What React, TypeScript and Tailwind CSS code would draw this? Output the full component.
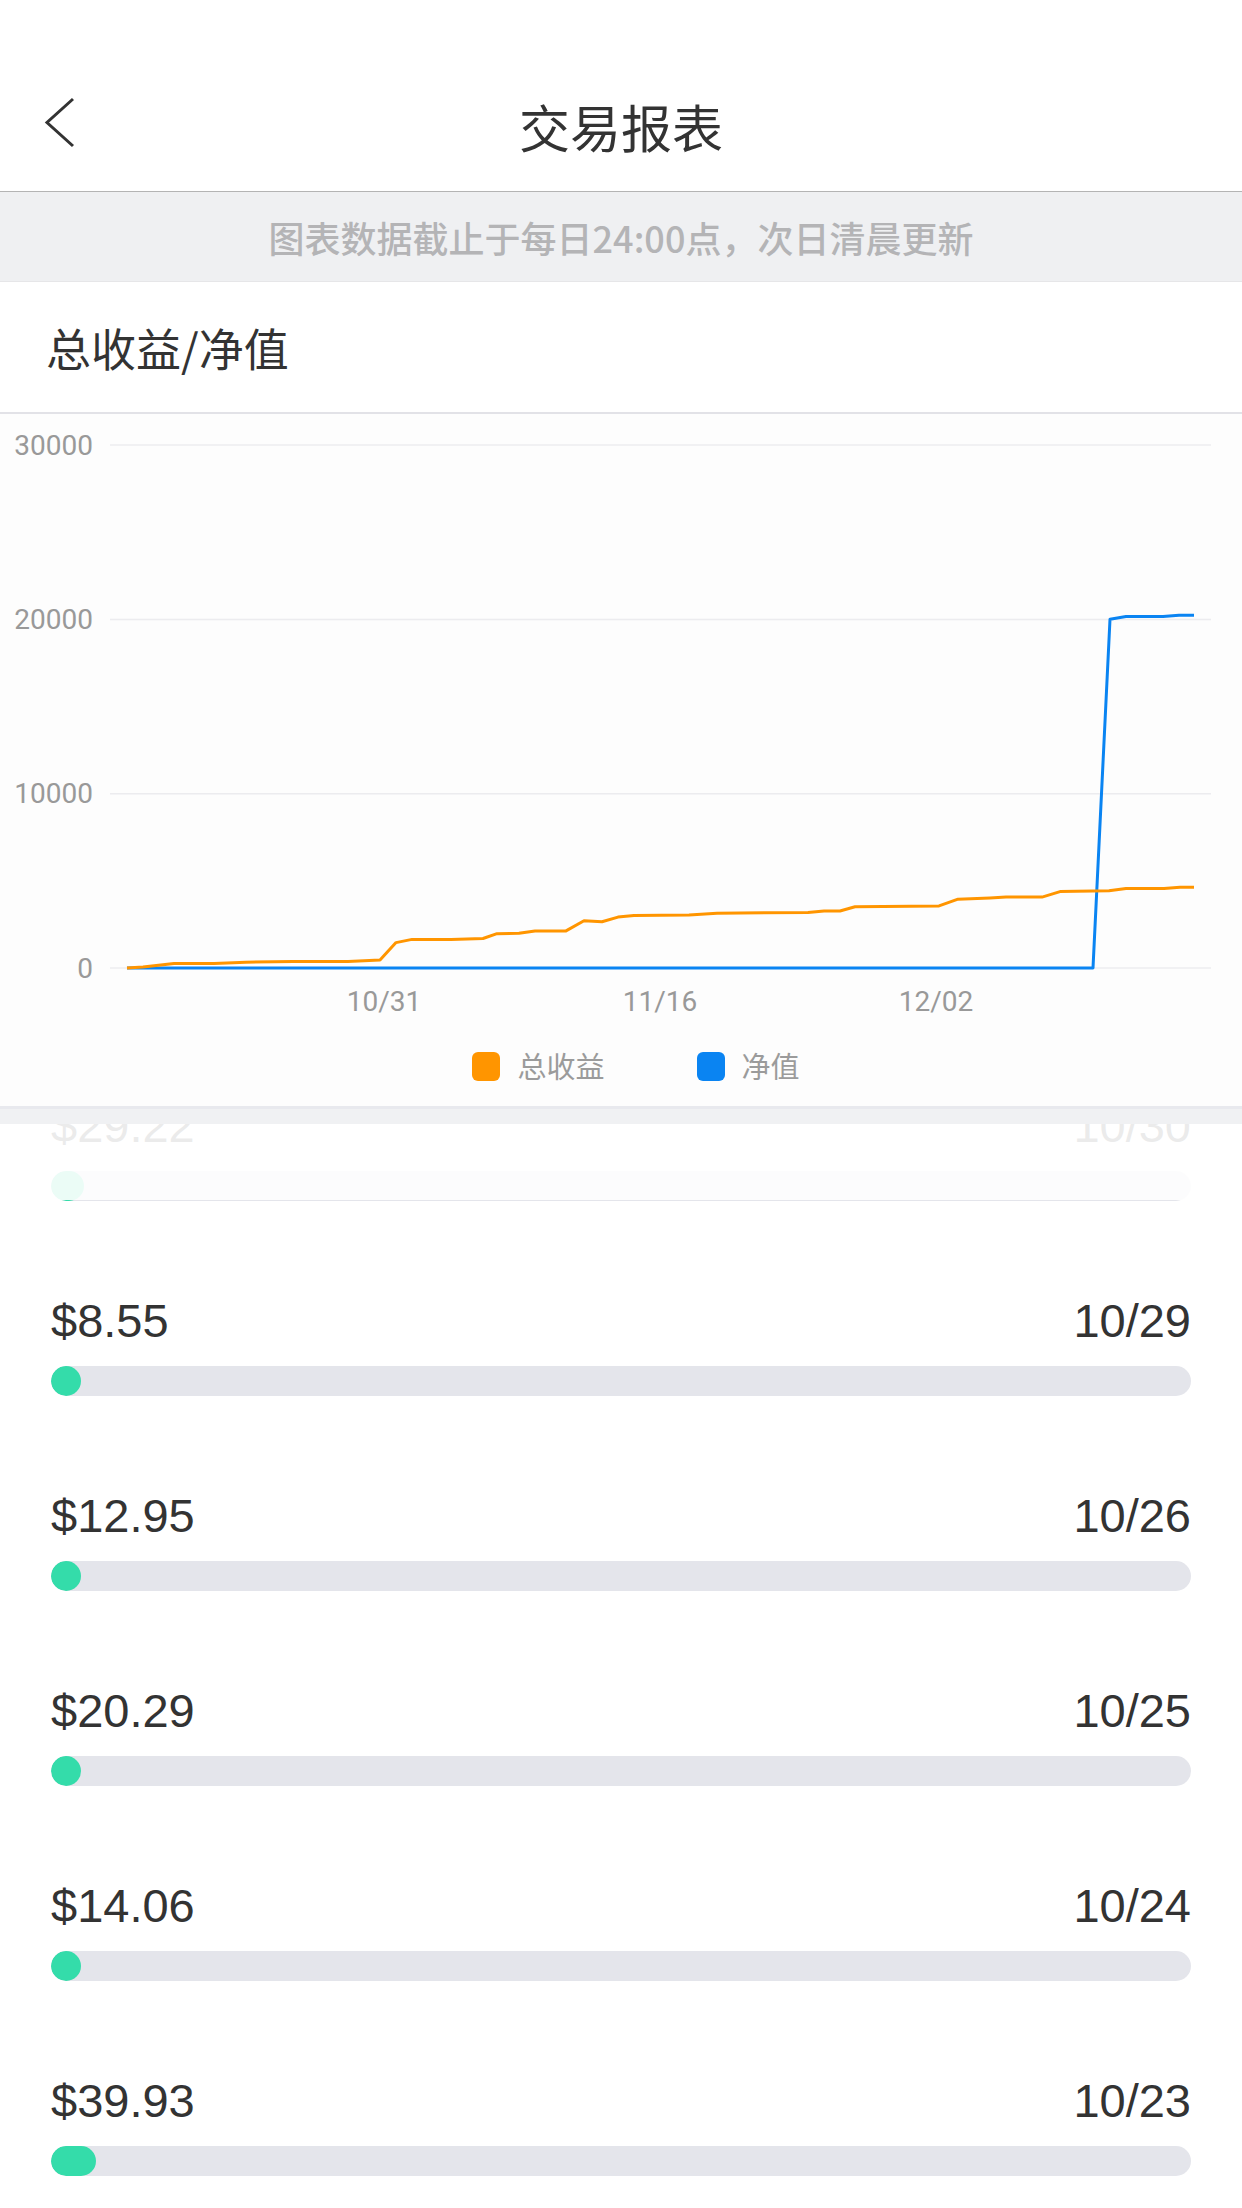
import React from 'react';

// chart geometry (px inside the svg, svg top sits at page y 415)
const X0 = 110;
const X1 = 1211;
const ZERO_Y = 554;
const STEP = 174.3; // per 10000

const yOf = (v: number) => ZERO_Y - (v / 10000) * STEP;

// [page x, value]
const incomeData: [number, number][] = [
  [127, 0], [143, 50], [174, 256], [214, 256], [246, 330], [293, 380], [348, 380], [380, 460],
  [396, 1460], [412, 1640], [451, 1640], [483, 1690], [497, 1970], [519, 1990], [535, 2126],
  [566, 2126], [584, 2716], [602, 2650], [618, 2920], [634, 3020], [689, 3040], [717, 3140],
  [808, 3190], [824, 3270], [840, 3270], [855, 3510], [939, 3560], [958, 3945], [990, 4020],
  [1006, 4070], [1042, 4070], [1060, 4381], [1109, 4430], [1126, 4560], [1164, 4560],
  [1180, 4637], [1194, 4637],
];

const netData: [number, number][] = [
  [127, 0], [1093, 0], [1110, 20009], [1126, 20163], [1163, 20163], [1179, 20240], [1194, 20240],
];

const toPoints = (data: [number, number][]) =>
  data.map(([x, v]) => `${x},${yOf(v).toFixed(1)}`).join(' ');

const rows = [
  { amount: '$29.22', date: '10/30', value: 29.22 },
  { amount: '$8.55', date: '10/29', value: 8.55 },
  { amount: '$12.95', date: '10/26', value: 12.95 },
  { amount: '$20.29', date: '10/25', value: 20.29 },
  { amount: '$14.06', date: '10/24', value: 14.06 },
  { amount: '$39.93', date: '10/23', value: 39.93 },
];

function Chart() {
  return (
    <svg width={1242} height={620} viewBox="0 0 1242 620" className="block">
      {[0, 10000, 20000, 30000].map((v) => (
        <g key={v}>
          <line x1={X0} x2={X1} y1={yOf(v)} y2={yOf(v)} stroke="#ececef" strokeWidth={1.5} />
          <text
            x={93}
            y={yOf(v)}
            textAnchor="end"
            dominantBaseline="central"
            fontSize={28}
            fill="#999999"
            fontFamily="Roboto, sans-serif"
          >
            {v}
          </text>
        </g>
      ))}
      {[
        { x: 384, label: '10/31' },
        { x: 660, label: '11/16' },
        { x: 936, label: '12/02' },
      ].map((t) => (
        <text
          key={t.label}
          x={t.x}
          y={587}
          textAnchor="middle"
          dominantBaseline="central"
          fontSize={28}
          fill="#999999"
          fontFamily="Roboto, sans-serif"
        >
          {t.label}
        </text>
      ))}
      <polyline points={toPoints(netData)} fill="none" stroke="#0a84f2" strokeWidth={3} strokeLinejoin="round" />
      <polyline points={toPoints(incomeData)} fill="none" stroke="#ff9500" strokeWidth={3} strokeLinejoin="round" />
    </svg>
  );
}

function Row({ amount, date, value }: { amount: string; date: string; value: number }) {
  const fill = Math.max(30, value * 1.13);
  return (
    <div className="h-[195px] px-[51px]">
      <div className="flex items-center justify-between h-[56px] text-[47px] text-[#333333] font-['Liberation_Sans',sans-serif]">
        <span>{amount}</span>
        <span>{date}</span>
      </div>
      <div className="mt-[17px] h-[30px] rounded-full bg-[#e4e5eb] overflow-hidden">
        <div className="h-full rounded-full bg-[#34dcaa]" style={{ width: fill }} />
      </div>
    </div>
  );
}

export default function App() {
  return (
    <div className="w-[1242px] h-[2208px] overflow-hidden bg-white font-['Noto_Sans_CJK_SC',sans-serif]">
      {/* nav */}
      <div className="h-[192px] pt-[60px] border-b-[1.5px] border-[#b4b4b4]">
        <div className="relative h-[132px] flex items-center justify-center">
          <svg width="40" height="60" viewBox="0 0 40 60" className="absolute left-[40px] top-[36px]">
            <polyline points="33,3 7,26.5 33,50" fill="none" stroke="#333333" strokeWidth={3} />
          </svg>
          <h1 className="text-[51px] text-[#333333] leading-none">交易报表</h1>
        </div>
      </div>

      {/* notice */}
      <div className="h-[90px] bg-[#eff0f2] border-b border-[#e6e6e8] flex items-center justify-center">
        <p className="text-[36px] font-medium text-[#b4b4b6] leading-none">图表数据截止于每日24:00点，次日清晨更新</p>
      </div>

      {/* chart section */}
      <div className="h-[132px] px-[46px] flex items-center border-b-2 border-[#e2e2e7]">
        <h2 className="text-[45px] text-[#333333] leading-none">总收益/净值</h2>
      </div>
      <div className="bg-[#fdfdfd]">
        <Chart />
        <div className="h-[64px] flex items-center justify-center gap-[92px] pl-[30px]">
          <div className="flex items-center gap-[17px]">
            <span className="w-[28px] h-[29px] rounded-[6px] bg-[#ff9500]" />
            <span className="text-[29px] text-[#9b9b9b]">总收益</span>
          </div>
          <div className="flex items-center gap-[17px]">
            <span className="w-[28px] h-[29px] rounded-[6px] bg-[#0a84f2]" />
            <span className="text-[29px] text-[#9b9b9b]">净值</span>
          </div>
        </div>
        <div className="h-[8px]" />
      </div>
      <div className="h-[18px] bg-[#f0f1f3] border-t-[3px] border-[#e8e9ee]" />

      {/* list */}
      <div className="relative overflow-hidden">
        <div className="-mt-[26px]">
          {rows.map((r) => (
            <Row key={r.date} {...r} />
          ))}
        </div>
        <div className="absolute left-0 right-0 top-0 h-[76px] bg-white/90" />
      </div>
    </div>
  );
}
